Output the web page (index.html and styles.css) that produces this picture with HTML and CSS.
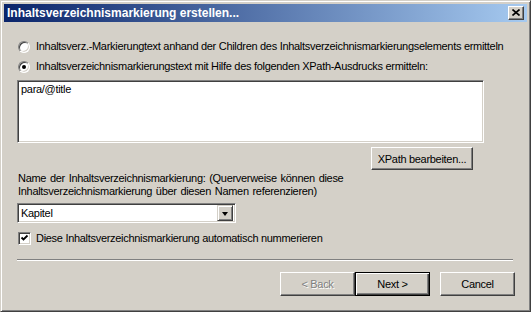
FILE: index.html
```html
<!DOCTYPE html>
<html lang="de">
<head>
  <meta charset="UTF-8" />
  <title>Inhaltsverzeichnismarkierung erstellen...</title>
  <link rel="stylesheet" href="styles.css">
</head>
<body>
  <div class="window">
    <!-- TITLE BAR -->
    <div class="titlebar">
      <span class="title">Inhaltsverzeichnismarkierung erstellen...</span>
      <span class="close">
        <svg width="8" height="7" viewBox="0 0 8 7"><path d="M0.5 0.5 L7.5 6.5 M7.5 0.5 L0.5 6.5" stroke="#000" stroke-width="1.6" fill="none"/></svg>
      </span>
    </div>

    <!-- CONTENT -->
    <div class="content">
      <label class="option"><span class="radio"></span>Inhaltsverz.-Markierungtext anhand der Children des Inhaltsverzeichnismarkierungselements ermitteln</label>
      <label class="option opt-2"><span class="radio checked"></span>Inhaltsverzeichnismarkierungstext mit Hilfe des folgenden XPath-Ausdrucks ermitteln:</label>

      <div class="xpath-box">para/@title</div>
      <div class="edit-row">
        <button class="btn btn-xpath">XPath bearbeiten...</button>
      </div>

      <p class="name-label">Name der Inhaltsverzeichnismarkierung: (Querverweise können diese<br>Inhaltsverzeichnismarkierung über diesen Namen referenzieren)</p>
      <div class="combo">
        <span class="combo-value">Kapitel</span>
        <span class="combo-arrow"><span class="tri"></span></span>
      </div>

      <label class="option check-row">
        <span class="checkbox">
          <svg width="9" height="9" viewBox="0 0 9 9"><path d="M1.5 3.5 L3.5 5.5 L7.5 1.5" stroke="#000" stroke-width="1.8" fill="none"/></svg>
        </span>Diese Inhaltsverzeichnismarkierung automatisch nummerieren
      </label>

      <div class="separator"></div>

      <!-- FOOTER BUTTONS -->
      <div class="footer">
        <button class="btn" disabled>&lt; Back</button>
        <button class="btn default">Next &gt;</button>
        <button class="btn cancel">Cancel</button>
      </div>
    </div>
  </div>
</body>
</html>
```

FILE: styles.css
```css
body{margin:0;padding:0;background:#d4d0c8;font-family:'Liberation Sans',Arial,sans-serif;font-size:11px;color:#000}
.window{width:531px;height:312px;box-sizing:border-box;background:#d4d0c8;border:1px solid;border-color:#d4d0c8 #404040 #404040 #d4d0c8;box-shadow:inset 1px 1px #fff,inset -1px -1px #808080;padding:3px;display:flex;flex-direction:column}
.titlebar{height:18px;background:linear-gradient(to right,#0a246a,#a6caf0);display:flex;align-items:center;padding:0 3px;color:#fff}
.title{font-weight:bold;font-size:12px;flex:1}
.close{width:16px;height:14px;box-sizing:border-box;background:#d4d0c8;border:1px solid;border-color:#fff #404040 #404040 #fff;box-shadow:inset -1px -1px #808080;display:flex;align-items:center;justify-content:center}
.close svg{display:block;margin-top:-1px}

.content{display:flex;flex-direction:column;align-items:flex-start;padding:0 12px 0 13px}
.option{display:flex;align-items:center;height:13px;line-height:13px;white-space:nowrap;letter-spacing:-.3px}
.option:first-child{margin-top:18px}
.opt-2{margin-top:7px}
.radio{width:12px;height:12px;box-sizing:border-box;border-radius:50%;background:#fff;border:1px solid;border-color:#808080 #fff #fff #808080;box-shadow:inset 1px 1px #404040,inset -1px -1px #d4d0c8;margin:0 6px 0 1px;display:flex;align-items:center;justify-content:center;flex:none}
.radio.checked::after{content:"";width:4px;height:4px;border-radius:50%;background:#000}

.xpath-box{margin-top:7px;width:467px;height:63px;box-sizing:border-box;background:#fff;border:1px solid;border-color:#808080 #fff #fff #808080;box-shadow:inset 1px 1px #404040,inset -1px -1px #d4d0c8;padding:2px 3px;letter-spacing:-.3px}
.edit-row{width:467px;display:flex;justify-content:flex-end;margin-top:4px}
.btn{font-family:inherit;font-size:11px;color:#000;background:#d4d0c8;border:1px solid;border-color:#fff #404040 #404040 #fff;box-shadow:inset -1px -1px #808080;padding:0;height:23px;letter-spacing:-.3px}
.btn-xpath{width:102px;margin-right:11px}

.name-label{margin:2px 0 0 1px;line-height:13px;letter-spacing:-.3px;word-spacing:1px}
.combo{margin-top:5px;width:219px;height:20px;box-sizing:border-box;background:#fff;border:1px solid;border-color:#808080 #fff #fff #808080;box-shadow:inset 1px 1px #404040,inset -1px -1px #d4d0c8;display:flex;align-items:center;padding:2px}
.combo-value{flex:1;padding-left:1px;letter-spacing:-.3px}
.combo-arrow{width:16px;height:16px;box-sizing:border-box;background:#d4d0c8;border:1px solid;border-color:#d4d0c8 #404040 #404040 #d4d0c8;box-shadow:inset 1px 1px #fff,inset -1px -1px #808080;display:flex;align-items:center;justify-content:center}
.tri{width:0;height:0;border-left:3.5px solid transparent;border-right:3.5px solid transparent;border-top:4px solid #000;margin-top:1px}

.check-row{margin-top:9px}
.checkbox{width:13px;height:13px;box-sizing:border-box;background:#fff;border:1px solid;border-color:#808080 #fff #fff #808080;box-shadow:inset 1px 1px #404040,inset -1px -1px #d4d0c8;margin:0 5px 0 1px;display:flex;align-items:center;justify-content:center;flex:none}
.checkbox svg{display:block}

.separator{margin-top:14px;width:496px;height:0;border-top:1px solid #808080;border-bottom:1px solid #fff}
.footer{margin-top:11px;align-self:flex-end;display:flex}
.footer .btn{width:75px;height:24px}
.btn:disabled{color:#808080;text-shadow:1px 1px #fff}
.default{border-color:#000;box-shadow:inset 1px 1px #fff,inset -1px -1px #404040,inset -2px -2px #808080}
.cancel{margin-left:10px}
```
